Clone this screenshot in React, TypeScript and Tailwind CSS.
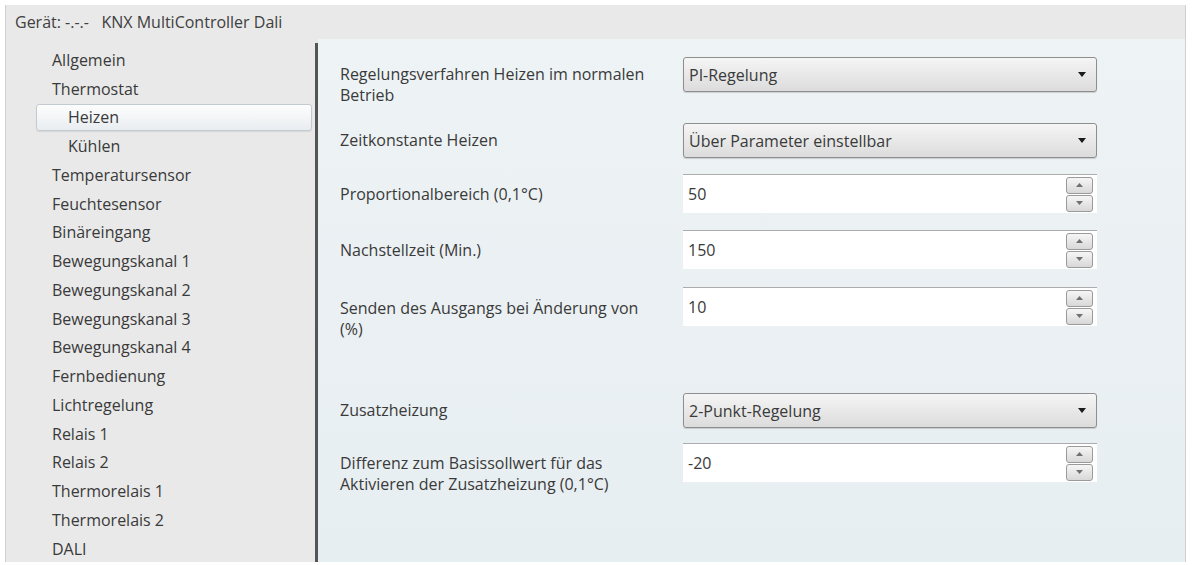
const FONT = "font-['Open_Sans','Liberation_Sans',sans-serif]";

const navItems: { label: string; sub?: boolean; active?: boolean }[] = [
  { label: "Allgemein" },
  { label: "Thermostat" },
  { label: "Heizen", sub: true, active: true },
  { label: "Kühlen", sub: true },
  { label: "Temperatursensor" },
  { label: "Feuchtesensor" },
  { label: "Binäreingang" },
  { label: "Bewegungskanal 1" },
  { label: "Bewegungskanal 2" },
  { label: "Bewegungskanal 3" },
  { label: "Bewegungskanal 4" },
  { label: "Fernbedienung" },
  { label: "Lichtregelung" },
  { label: "Relais 1" },
  { label: "Relais 2" },
  { label: "Thermorelais 1" },
  { label: "Thermorelais 2" },
  { label: "DALI" },
];

function Select({ value }: { value: string }) {
  return (
    <div className="w-[414px] h-[35px] flex items-center justify-between pl-[5px] pr-[10px] rounded-[3px] border border-[#8e8e8e] bg-gradient-to-b from-[#f5f5f5] to-[#dcdcdc] shadow-[0_1px_1px_rgba(0,0,0,0.15)]">
      <span>{value}</span>
      <svg width="8" height="5" viewBox="0 0 8 5">
        <path d="M0 0h8L4 5z" fill="#1a1a1a" />
      </svg>
    </div>
  );
}

function SpinButton({ up }: { up?: boolean }) {
  return (
    <div className="w-[27px] h-[17px] flex items-center justify-center rounded-[3px] border border-[#9a9a9a] bg-gradient-to-b from-[#f6f6f6] to-[#d8d8d8]">
      <svg width="7" height="4" viewBox="0 0 7 4">
        <path d={up ? "M0 4h7L3.5 0z" : "M0 0h7L3.5 4z"} fill="#707070" />
      </svg>
    </div>
  );
}

function NumberInput({ value }: { value: string }) {
  return (
    <div className="w-[414px] h-[39px] flex items-center justify-between pl-[5px] pr-[4px] bg-white border-t border-[#acacac]">
      <span>{value}</span>
      <div className="flex flex-col gap-[1px]">
        <SpinButton up />
        <SpinButton />
      </div>
    </div>
  );
}

function Row({
  mt,
  pt,
  label,
  children,
}: {
  mt: string;
  pt: string;
  label: React.ReactNode;
  children: React.ReactNode;
}) {
  return (
    <div className={`flex items-start ${mt}`}>
      <div className={`w-[343px] leading-[21px] ${pt}`}>{label}</div>
      {children}
    </div>
  );
}

export default function App() {
  return (
    <div className={`w-[1193px] h-[565px] bg-white pt-[5px] pl-[5px] pr-[7px] pb-[3px] text-[16px] text-[#3a3a3a] ${FONT}`}>
      <div className="h-full flex flex-col border-l border-r border-[#cfcfcf] bg-[#e9e9e9]">
        <div className="h-[34px] flex items-center pl-[9px] text-[16px] text-[#404040]">
          Gerät: -.-.-&nbsp;&nbsp;&nbsp;KNX MultiController Dali
        </div>

        <div className="flex flex-1 min-h-0">
          <div className="w-[309px] pt-[6.5px]">
            {navItems.map((item) =>
              item.sub ? (
                <div key={item.label} className="h-[28.75px] flex items-center">
                  <div
                    className={`ml-[30px] mr-[3px] flex-1 h-[27px] flex items-center pl-[31px] rounded-[3px] ${
                      item.active
                        ? "border border-[#c3cbd2] bg-gradient-to-b from-[#fdfdfd] to-[#e9edf0] shadow-[0_1px_1px_rgba(0,0,0,0.08)]"
                        : "border border-transparent"
                    }`}
                  >
                    {item.label}
                  </div>
                </div>
              ) : (
                <div key={item.label} className="h-[28.75px] flex items-center pl-[46px]">
                  {item.label}
                </div>
              )
            )}
          </div>

          <div className="w-[3px] mt-[4px] bg-[#555555]" />

          <div className="flex-1 bg-gradient-to-b from-[#eef3f5] to-[#e7eef1] pl-[22px] flex flex-col">
            <Row
              mt="mt-[18px]"
              pt="pt-[7px]"
              label={
                <>
                  Regelungsverfahren Heizen im normalen
                  <br />
                  Betrieb
                </>
              }
            >
              <Select value="PI-Regelung" />
            </Row>
            <Row mt="mt-[17px]" pt="pt-[7px]" label="Zeitkonstante Heizen">
              <Select value="Über Parameter einstellbar" />
            </Row>
            <Row mt="mt-[16px]" pt="pt-[10px]" label="Proportionalbereich (0,1°C)">
              <NumberInput value="50" />
            </Row>
            <Row mt="mt-[17px]" pt="pt-[10px]" label="Nachstellzeit (Min.)">
              <NumberInput value="150" />
            </Row>
            <Row
              mt="mt-[18px]"
              pt="pt-[11px]"
              label={
                <>
                  Senden des Ausgangs bei Änderung von
                  <br />
                  (%)
                </>
              }
            >
              <NumberInput value="10" />
            </Row>
            <Row mt="mt-[53px]" pt="pt-[7px]" label="Zusatzheizung">
              <Select value="2-Punkt-Regelung" />
            </Row>
            <Row
              mt="mt-[15px]"
              pt="pt-[10px]"
              label={
                <>
                  Differenz zum Basissollwert für das
                  <br />
                  Aktivieren der Zusatzheizung (0,1°C)
                </>
              }
            >
              <NumberInput value="-20" />
            </Row>
          </div>
        </div>
      </div>
    </div>
  );
}
